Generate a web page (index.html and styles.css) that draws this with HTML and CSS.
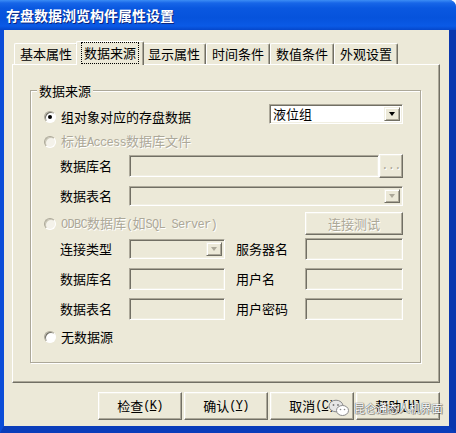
FILE: index.html
```html
<!DOCTYPE html>
<html lang="zh-CN">
<head>
<meta charset="utf-8">
<title>存盘数据浏览构件属性设置</title>
<link rel="stylesheet" href="styles.css">
</head>
<body>
<div class="window">
  <div class="titlebar"><span class="title">存盘数据浏览构件属性设置</span></div>
  <div class="client">
    <div class="tabs">
      <div class="tab">基本属性</div>
      <div class="tab active"><span class="focus">数据来源</span></div>
      <div class="tab">显示属性</div>
      <div class="tab">时间条件</div>
      <div class="tab">数值条件</div>
      <div class="tab">外观设置</div>
    </div>
    <div class="panel">
      <div class="group">
        <div class="legend">数据来源</div>

        <div class="row r1">
          <span class="radio checked"></span><span class="rlabel">组对象对应的存盘数据</span>
          <div class="combo c-main"><span class="ctext">液位组</span><span class="cbtn"><i class="arrow"></i></span></div>
        </div>

        <div class="row r2">
          <span class="radio disabled"></span><span class="rlabel dis">标准<span class="lat">Access</span>数据库文件</span>
        </div>

        <div class="row r3">
          <span class="label">数据库名</span>
          <div class="input grow"></div>
          <div class="btn dots dis"><span class="lat">...</span></div>
        </div>

        <div class="row r4">
          <span class="label">数据表名</span>
          <div class="combo grow off"><span class="ctext"></span><span class="cbtn"><i class="arrow"></i></span></div>
        </div>

        <div class="row r5">
          <span class="radio disabled"></span><span class="rlabel dis"><span class="lat">ODBC</span>数据库<span class="lat">(</span>如<span class="lat">SQL Server)</span></span>
          <div class="btn test dis">连接测试</div>
        </div>

        <div class="row r6">
          <span class="label">连接类型</span>
          <div class="combo small off"><span class="ctext"></span><span class="cbtn"><i class="arrow"></i></span></div>
          <span class="label2">服务器名</span>
          <div class="input right"></div>
        </div>

        <div class="row r7">
          <span class="label">数据库名</span>
          <div class="input small"></div>
          <span class="label2">用户名</span>
          <div class="input right"></div>
        </div>

        <div class="row r8">
          <span class="label">数据表名</span>
          <div class="input small"></div>
          <span class="label2">用户密码</span>
          <div class="input right"></div>
        </div>

        <div class="row r9">
          <span class="radio"></span><span class="rlabel">无数据源</span>
        </div>
      </div>
    </div>
    <div class="buttons">
      <div class="btn action">检查<span class="lat">(<u>K</u>)</span></div>
      <div class="btn action">确认<span class="lat">(<u>Y</u>)</span></div>
      <div class="btn action">取消<span class="lat">(<u>C</u>)</span></div>
      <div class="btn action">帮助<span class="lat">[H]</span></div>
    </div>
  </div>
  <div class="watermark">
    <svg class="wx" width="22" height="18" viewBox="0 0 22 18">
      <ellipse cx="8" cy="7" rx="7" ry="5.8" fill="#e6e6e6" stroke="#8a8a8a" stroke-width="1"/>
      <circle cx="5.5" cy="6" r="0.9" fill="#777"/>
      <circle cx="10" cy="6" r="0.9" fill="#777"/>
      <ellipse cx="14.5" cy="11.5" rx="6" ry="5" fill="#fff" stroke="#8a8a8a" stroke-width="1"/>
      <circle cx="12.5" cy="10.5" r="0.8" fill="#888"/>
      <circle cx="16.5" cy="10.5" r="0.8" fill="#888"/>
    </svg>
    <span class="wtext">昆仑通态人机界面</span>
  </div>
</div>
</body>
</html>
```
FILE: styles.css
```css
* { box-sizing: border-box; }
html, body { margin: 0; padding: 0; }
body {
  width: 456px;
  height: 433px;
  overflow: hidden;
  background: #ffffff;
  font-family: "Noto Sans CJK SC", "Noto Sans", sans-serif;
  font-size: 13px;
  line-height: 16px;
  color: #000;
}
.window {
  position: relative;
  width: 456px;
  height: 433px;
  display: flex;
  flex-direction: column;
  border-top-right-radius: 7px;
  overflow: hidden;
  background: #0A4ACF;
}
.titlebar {
  height: 30px;
  flex: none;
  display: flex;
  align-items: center;
  padding: 0 0 1px 6px;
  background: linear-gradient(to bottom, #3C8DF5 0px, #1766E8 3px, #0A58E0 8px, #0653DC 18px, #0A5AE6 26px, #0547CB 30px);
}
.title {
  color: #fff;
  font-weight: 700;
  font-size: 14px;
  line-height: 18px;
  text-shadow: 1px 1px 0 #0A2580;
}
.client {
  flex: 1;
  display: flex;
  flex-direction: column;
  background: #ECE9D8;
  border-left: 4px solid #0B4DD8;
  border-right: 7px solid #0A36AE;
  border-bottom: 7px solid #0A3DBA;
  padding: 11px 0 0 8px;
}

/* tabs */
.tabs {
  display: flex;
  align-items: flex-end;
  height: 23px;
  padding-left: 2px;
}
.tab {
  width: 64px;
  height: 21px;
  display: flex;
  align-items: center;
  justify-content: center;
  border-top: 1px solid #fff;
  border-left: 1px solid #fff;
  border-right: 1px solid #716F64;
  box-shadow: inset -1px 0 0 #ACA899;
  border-radius: 2px 2px 0 0;
  padding-bottom: 1px;
}
.tab.active {
  position: relative;
  z-index: 1;
  height: 24px;
  margin: 0 -2px -1px -2px;
  width: 68px;
  background: #ECE9D8;
  padding-bottom: 2px;
}
.focus {
  outline: 1px dotted #000;
  outline-offset: 1px;
  padding: 1px 1px;
}

/* panel */
.panel {
  width: 428px;
  height: 319px;
  border-top: 1px solid #fff;
  border-left: 1px solid #fff;
  border-right: 1px solid #716F64;
  border-bottom: 1px solid #716F64;
  box-shadow: inset -1px -1px 0 #ACA899;
  padding: 25px 0 0 17px;
}
.group {
  width: 391px;
  height: 273px;
  display: flex;
  flex-direction: column;
  border: 1px solid #ACA899;
  box-shadow: inset 1px 1px 0 #fff, 1px 1px 0 #fff;
}
.legend {
  align-self: flex-start;
  margin: -9px 0 0 6px;
  padding: 0 2px;
  height: 17px;
  line-height: 17px;
  background: #ECE9D8;
}

/* rows */
.row {
  display: flex;
  align-items: center;
  padding: 0 17px 0 13px;
  flex: none;
}
.r1 { height: 26px; margin-top: 5px; }
.r1 .combo { align-self: flex-start; }
.r2 { height: 16px; margin-top: 4px; }
.r3 { height: 24px; margin-top: 4px; }
.r4 { height: 20px; margin-top: 8px; }
.r5 { height: 23px; margin-top: 6px; }
.r6 { height: 22px; margin-top: 3px; }
.r7 { height: 22px; margin-top: 8px; }
.r8 { height: 22px; margin-top: 8px; }
.r9 { height: 16px; margin-top: 9px; }

.radio {
  position: relative;
  flex: none;
  width: 12px;
  height: 12px;
  border-radius: 50%;
  background: #fff;
  border: 1px solid;
  border-color: #ACA899 #fff #fff #ACA899;
  box-shadow: inset 1px 1px 0 #716F64;
  margin-right: 5px;
}
.radio.disabled { background: #F4F2EA; box-shadow: inset 1px 1px 0 #C9C6B6; }
.radio.checked::after {
  content: "";
  position: absolute;
  left: 3px;
  top: 3px;
  width: 4px;
  height: 4px;
  border-radius: 50%;
  background: #000;
}
.rlabel { white-space: nowrap; }
.dis { color: #ACA899; text-shadow: 1px 1px 0 #fff; }
.lat {
  font-family: "Liberation Mono", monospace;
  font-size: 12px;
  letter-spacing: -0.7px;
}

.label { width: 85px; flex: none; padding-left: 16px; }
.label2 { width: 80px; flex: none; padding-left: 11px; }

.input {
  height: 22px;
  background: #ECE9D8;
  border: 1px solid;
  border-color: #ACA899 #fff #fff #ACA899;
  box-shadow: inset 1px 1px 0 #716F64, inset -1px -1px 0 #F1EFE2;
}
.grow { flex: 1; }
.small { width: 96px; flex: none; }
.right { width: 98px; flex: none; }

.combo {
  height: 20px;
  display: flex;
  align-items: stretch;
  background: #fff;
  border: 1px solid;
  border-color: #ACA899 #fff #fff #ACA899;
  box-shadow: inset 1px 1px 0 #716F64, inset -1px -1px 0 #F1EFE2;
  padding: 2px;
}
.combo.off { background: #ECE9D8; }
.combo.small { width: 96px; flex: none; }
.c-main { width: 134px; margin-left: auto; }
.ctext { flex: 1; padding-left: 1px; line-height: 14px; font-size: 13px; }
.cbtn {
  width: 16px;
  flex: none;
  display: flex;
  align-items: center;
  justify-content: center;
  background: #ECE9D8;
  border: 1px solid;
  border-color: #F1EFE2 #716F64 #716F64 #F1EFE2;
  box-shadow: inset 1px 1px 0 #fff, inset -1px -1px 0 #ACA899;
}
.arrow {
  width: 0;
  height: 0;
  border-left: 3.5px solid transparent;
  border-right: 3.5px solid transparent;
  border-top: 4px solid #000;
}
.off .arrow { border-top-color: #ACA899; }

.btn {
  display: flex;
  align-items: center;
  justify-content: center;
  background: #ECE9D8;
  border: 1px solid;
  border-color: #fff #716F64 #716F64 #fff;
  box-shadow: inset -1px -1px 0 #ACA899, inset 1px 1px 0 #F1EFE2;
  white-space: nowrap;
}
.dots { width: 24px; height: 24px; flex: none; }
.test { width: 98px; height: 23px; margin-left: auto; }

.buttons {
  width: 428px;
  display: flex;
  justify-content: flex-end;
  gap: 2px;
  margin-top: 9px;
}
.action { width: 84px; height: 28px; }
.action u { text-decoration: underline; }

/* watermark overlay */
.watermark {
  position: absolute;
  left: 328px;
  top: 399px;
  display: flex;
  align-items: center;
  gap: 4px;
}
.wtext {
  font-size: 11px;
  line-height: 14px;
  color: #fff;
  letter-spacing: 0.1px;
  text-shadow: 0 0 1px #555, 0 0 1px #555, 1px 1px 0 rgba(0,0,0,0.35);
}
```
